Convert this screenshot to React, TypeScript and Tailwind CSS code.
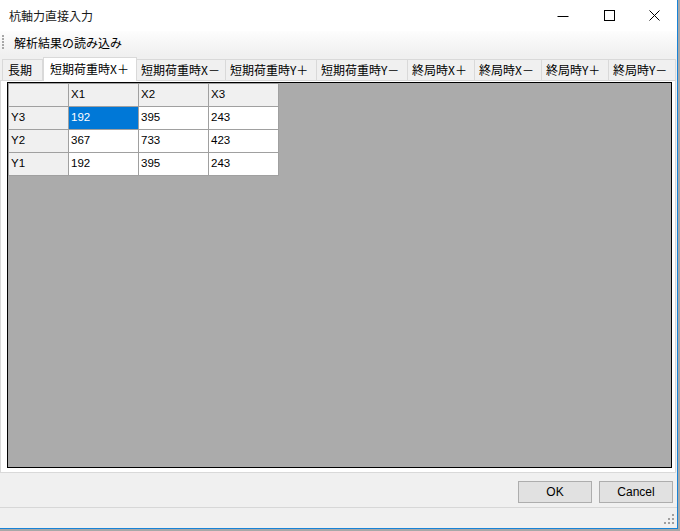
import React from "react";

const JP = { fontFamily: '"Noto Sans CJK JP", "Noto Sans", sans-serif' };
const CELL = { fontFamily: '"Liberation Sans", Arial, sans-serif' };

const tabs: { label: string; w: string }[] = [
  { label: "長期", w: "w-[41px]" },
  { label: "短期荷重時X＋", w: "w-[94px]" },
  { label: "短期荷重時X－", w: "w-[89px]" },
  { label: "短期荷重時Y＋", w: "w-[91px]" },
  { label: "短期荷重時Y－", w: "w-[91px]" },
  { label: "終局時X＋", w: "w-[67px]" },
  { label: "終局時X－", w: "w-[67px]" },
  { label: "終局時Y＋", w: "w-[67px]" },
  { label: "終局時Y－", w: "w-[67px]" },
];

const rows = [
  { h: "Y3", v: ["192", "395", "243"] },
  { h: "Y2", v: ["367", "733", "423"] },
  { h: "Y1", v: ["192", "395", "243"] },
];

function Cell({
  children,
  w,
  header,
  selected,
}: {
  children?: React.ReactNode;
  w: string;
  header?: boolean;
  selected?: boolean;
}) {
  return (
    <div
      className={
        "box-border h-[23px] border-r border-b border-[#a0a0a0] flex items-center pl-[2px] text-[11.5px] leading-none " +
        w +
        " " +
        (selected ? "bg-[#0078d7] text-white" : header ? "bg-[#f0f0f0] text-black" : "bg-white text-black")
      }
      style={CELL}
    >
      {children}
    </div>
  );
}

export default function App() {
  return (
    <div className="w-[680px] h-[531px] bg-[#a8a8a8] overflow-hidden">
      <div className="box-border w-[678px] h-[529px] flex flex-col bg-[#f0f0f0] border-r border-b border-[#1883d7]">
        {/* Title bar */}
        <div className="h-[31px] bg-white flex items-center shrink-0">
          <div className="pl-[9px] flex-1 text-[12px] text-[#1a1a1a]" style={JP}>
            杭軸力直接入力
          </div>
          <div className="flex h-full">
            <div className="w-[46px] h-full flex items-center justify-center">
              <svg width="12" height="12" viewBox="0 0 12 12">
                <line x1="0.5" y1="6.5" x2="11.5" y2="6.5" stroke="#000" strokeWidth="1" />
              </svg>
            </div>
            <div className="w-[46px] h-full flex items-center justify-center">
              <svg width="11" height="11" viewBox="0 0 11 11">
                <rect x="0.5" y="0.5" width="10" height="10" fill="none" stroke="#000" strokeWidth="1" />
              </svg>
            </div>
            <div className="w-[45px] h-full flex items-center justify-center">
              <svg width="11" height="11" viewBox="0 0 11 11">
                <path d="M0.5 0.5 L10.5 10.5 M10.5 0.5 L0.5 10.5" stroke="#000" strokeWidth="1" />
              </svg>
            </div>
          </div>
        </div>

        {/* Toolbar */}
        <div className="h-[24px] shrink-0 flex items-center bg-gradient-to-b from-[#fdfdfd] to-[#f0f0f0]">
          <svg width="3" height="16" viewBox="0 0 3 16" className="ml-[2px]">
            {[0, 3, 6, 9, 12].map((y) => (
              <rect key={y} x="0" y={y} width="2" height="2" fill="#a8a8a8" />
            ))}
          </svg>
          <div className="ml-[9px] text-[12px] text-black" style={JP}>
            解析結果の読み込み
          </div>
        </div>

        {/* Tabs */}
        <div className="h-[25px] shrink-0 flex items-end pl-[2px]">
          {tabs.map((t, i) =>
            i === 1 ? (
              <div
                key={t.label}
                className={
                  "box-border relative z-10 h-[24px] -mb-[1px] bg-white border-t border-l border-r border-[#d9d9d9] flex items-center pl-[6px] pb-[2px] text-[12px] text-black whitespace-nowrap overflow-hidden " +
                  t.w
                }
                style={JP}
              >
                {t.label}
              </div>
            ) : (
              <div
                key={t.label}
                className={
                  "box-border h-[21px] bg-[#f0f0f0] border-t border-r border-[#d9d9d9] flex items-center pl-[4px] text-[12px] text-black whitespace-nowrap overflow-hidden " +
                  (i === 0 ? "border-l pl-[5px] " : "") +
                  t.w
                }
                style={JP}
              >
                {t.label}
              </div>
            )
          )}
        </div>

        {/* Panel */}
        <div className="box-border w-[676px] h-[393px] shrink-0 border border-[#d9d9d9] bg-white pt-[1px] pl-[6px] pr-[3px] pb-[4px] flex">
          <div className="flex-1 border border-black bg-[#ababab]">
            <div className="inline-flex flex-col border-t border-l border-[#a0a0a0]">
              <div className="flex">
                <Cell w="w-[60px]" header />
                <Cell w="w-[70px]" header>X1</Cell>
                <Cell w="w-[70px]" header>X2</Cell>
                <Cell w="w-[70px]" header>X3</Cell>
              </div>
              {rows.map((r, ri) => (
                <div className="flex" key={r.h}>
                  <Cell w="w-[60px]" header>
                    {r.h}
                  </Cell>
                  {r.v.map((v, ci) => (
                    <Cell w="w-[70px]" key={ci} selected={ri === 0 && ci === 0}>
                      {v}
                    </Cell>
                  ))}
                </div>
              ))}
            </div>
          </div>
        </div>

        {/* Buttons */}
        <div className="h-[34px] shrink-0 flex items-start justify-end pt-[8px] pr-[4px] gap-[7px]">
          <button
            className="box-border w-[74px] h-[22px] bg-[#e1e1e1] border border-[#adadad] text-[12px] text-black flex items-center justify-center"
            style={CELL}
          >
            OK
          </button>
          <button
            className="box-border w-[74px] h-[22px] bg-[#e1e1e1] border border-[#adadad] text-[12px] text-black flex items-center justify-center"
            style={CELL}
          >
            Cancel
          </button>
        </div>

        {/* Status strip */}
        <div className="flex-1 border-t border-[#d7d7d7] flex items-end justify-end">
          <svg width="12" height="12" viewBox="0 0 12 12" className="mb-[2px] mr-[1px]">
            <rect x="8" y="0" width="2" height="2" fill="#a0a0a0" />
            <rect x="4" y="4" width="2" height="2" fill="#a0a0a0" />
            <rect x="8" y="4" width="2" height="2" fill="#a0a0a0" />
            <rect x="0" y="8" width="2" height="2" fill="#a0a0a0" />
            <rect x="4" y="8" width="2" height="2" fill="#a0a0a0" />
            <rect x="8" y="8" width="2" height="2" fill="#a0a0a0" />
          </svg>
        </div>
      </div>
    </div>
  );
}
